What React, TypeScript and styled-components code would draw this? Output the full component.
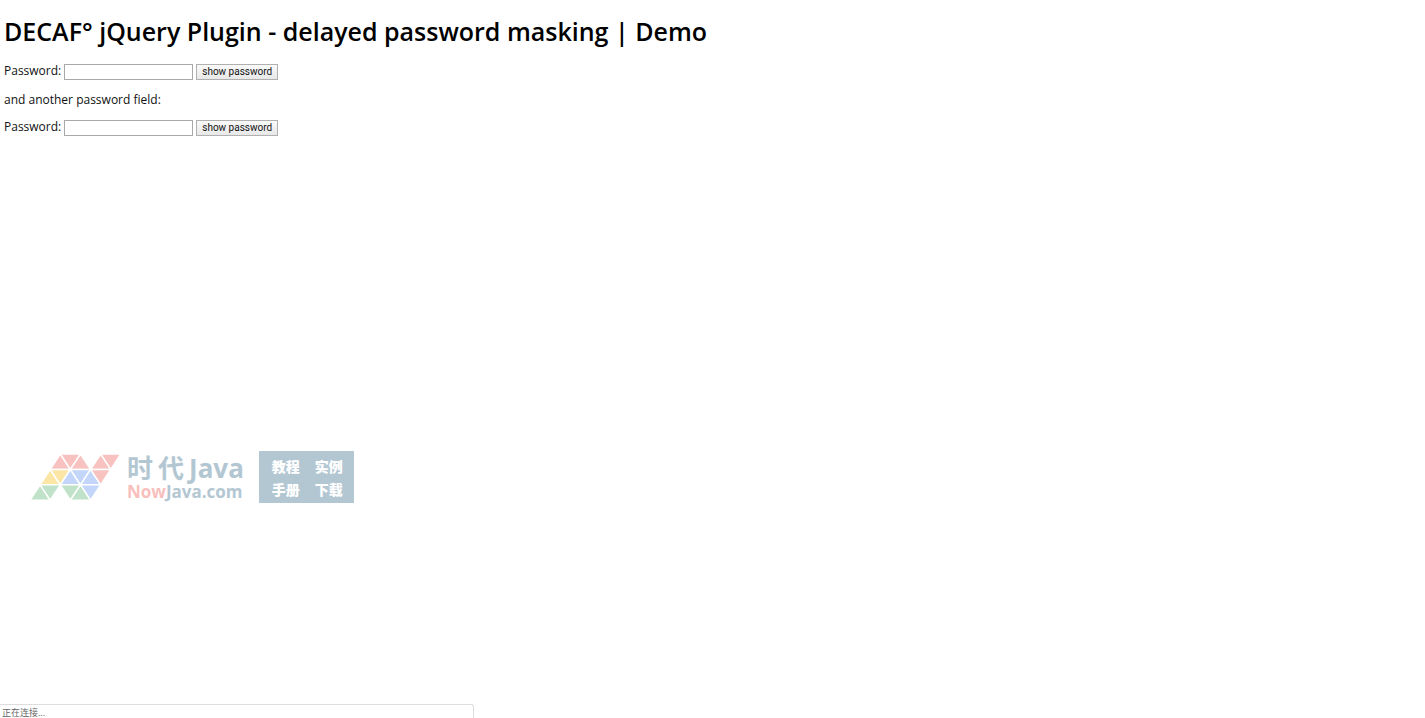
import React, { useState } from "react";
import styled, { createGlobalStyle } from "styled-components";

const GlobalStyle = createGlobalStyle`
  *, *::before, *::after { box-sizing: border-box; }
  body {
    margin: 0;
    background: #fff;
    color: #000;
    font: 12px/18px "Open Sans", "Noto Sans CJK SC", sans-serif;
  }
`;

const Page = styled.div`
  display: flex;
  flex-direction: column;
  min-height: 100vh;
`;

const Content = styled.main`
  display: flex;
  flex-direction: column;
  align-items: flex-start;
  gap: 10px;
  padding: 12px 4px 0;
`;

const Title = styled.h1`
  margin: 0 0 3px;
  font-size: 25px;
  line-height: 38px;
  font-weight: 600;
`;

const Field = styled.form`
  display: flex;
  align-items: center;
  gap: 3px;
  height: 18px;
`;

const Label = styled.label`
  padding-bottom: 2px;
  color: #111;
`;

const Note = styled.p`
  margin: 0;
  color: #111;
`;

const PasswordInput = styled.input`
  width: 129px;
  height: 16px;
  padding: 0 2px;
  border: 1px solid #a9a9a9;
  background: #fff;
  font: 11px "Liberation Sans", sans-serif;
`;

const ToggleButton = styled.button`
  height: 16px;
  padding: 0 5px;
  border: 1px solid #b0b0b0;
  background: linear-gradient(#fafafa, #e8e8e8);
  color: #111;
  font: 10px/14px Roboto, "Liberation Sans", sans-serif;
`;

const Brand = styled.aside`
  display: flex;
  align-items: center;
  margin: auto 0 201px 30px;
`;

const BrandText = styled.div`
  display: flex;
  flex-direction: column;
  margin: 0 15px 0 6px;
  color: #b3c7d3;
  font-weight: 700;
`;

const BrandName = styled.div`
  display: flex;
  gap: 5px;
  font-size: 26px;
  line-height: 30px;
`;

const BrandSite = styled.div`
  font-size: 17px;
  line-height: 18px;
`;

const Accent = styled.span`
  color: #f9bfbd;
`;

const Topics = styled.div`
  display: grid;
  grid-template-columns: auto auto;
  gap: 0 15px;
  padding: 4px 11px 2px 13px;
  background: #b3c7d3;
  color: #fff;
  font-size: 14px;
  line-height: 23px;
  font-weight: 900;
`;

const StatusBar = styled.footer`
  width: 474px;
  max-width: 100%;
  height: 14px;
  padding: 0 2px;
  border: 1px solid #ddd;
  border-width: 1px 1px 0 0;
  border-radius: 0 3px 0 0;
  color: #666;
  font-size: 9px;
  line-height: 16px;
`;

const RED = "#f7c2bf";
const YELLOW = "#fbe6a6";
const GREEN = "#bfe2c8";
const BLUE = "#c3d6fa";

/* [left edge in half-triangle steps, row, points up, colour] */
const tiles: [number, number, boolean, string][] = [
  [2, 0, true, RED], [3, 0, false, RED], [4, 0, true, RED],
  [6, 0, true, RED], [7, 0, false, RED],
  [1, 1, true, YELLOW], [2, 1, false, YELLOW],
  [3, 1, true, BLUE], [4, 1, false, BLUE], [5, 1, true, BLUE],
  [6, 1, false, RED],
  [0, 2, true, GREEN], [1, 2, false, GREEN],
  [3, 2, false, GREEN], [4, 2, true, GREEN], [5, 2, false, BLUE],
];

function Logo() {
  return (
    <svg width="91" height="48" viewBox="0 0 91 48" aria-hidden="true">
      {tiles.map(([step, row, up, fill]) => {
        const x = step * 10.1;
        const top = row * 15.4 + 1;
        const bottom = top + 15.4;
        const points = up
          ? `${x},${bottom} ${x + 10.1},${top} ${x + 20.2},${bottom}`
          : `${x},${top} ${x + 20.2},${top} ${x + 10.1},${bottom}`;
        return (
          <polygon
            key={`${step}-${row}`}
            points={points}
            fill={fill}
            stroke="#fff"
            strokeWidth="1.5"
          />
        );
      })}
    </svg>
  );
}

function PasswordField({ id }: { id: string }) {
  const [shown, setShown] = useState(false);
  return (
    <Field>
      <Label htmlFor={id}>Password:</Label>
      <PasswordInput id={id} type={shown ? "text" : "password"} />
      <ToggleButton type="button" onClick={() => setShown(!shown)}>
        {shown ? "hide password" : "show password"}
      </ToggleButton>
    </Field>
  );
}

export default function App() {
  return (
    <Page>
      <GlobalStyle />
      <Content>
        <Title>DECAF° jQuery Plugin - delayed password masking | Demo</Title>
        <PasswordField id="password-one" />
        <Note>and another password field:</Note>
        <PasswordField id="password-two" />
      </Content>
      <Brand>
        <Logo />
        <BrandText>
          <BrandName>
            <span>时</span>
            <span>代</span>
            <span>Java</span>
          </BrandName>
          <BrandSite>
            <Accent>Now</Accent>Java.com
          </BrandSite>
        </BrandText>
        <Topics>
          <span>教程</span>
          <span>实例</span>
          <span>手册</span>
          <span>下载</span>
        </Topics>
      </Brand>
      <StatusBar>正在连接...</StatusBar>
    </Page>
  );
}
